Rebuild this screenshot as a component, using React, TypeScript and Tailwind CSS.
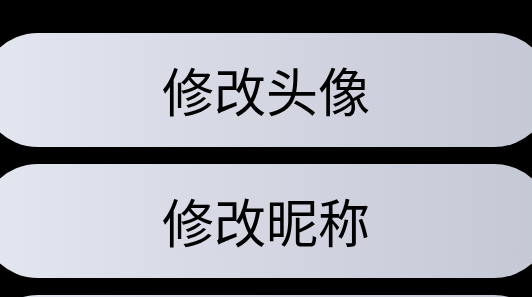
import React from "react";

const items = ["修改头像", "修改昵称", ""];

export default function App() {
  return (
    <div className="w-[532px] h-[297px] overflow-hidden bg-black">
      <div className="flex flex-col gap-[17px] pt-[33px] ml-[-19px] w-[570px]">
        {items.map((t, i) => (
          <button
            key={i}
            className="h-[114px] w-full shrink-0 rounded-full bg-gradient-to-r from-[#e4e7f0] to-[#c4c7d4] flex items-center justify-center text-black text-[52px] leading-none"
            style={{ fontFamily: '"Noto Sans CJK SC", "Noto Sans", sans-serif' }}
          >
            {t}
          </button>
        ))}
      </div>
    </div>
  );
}
